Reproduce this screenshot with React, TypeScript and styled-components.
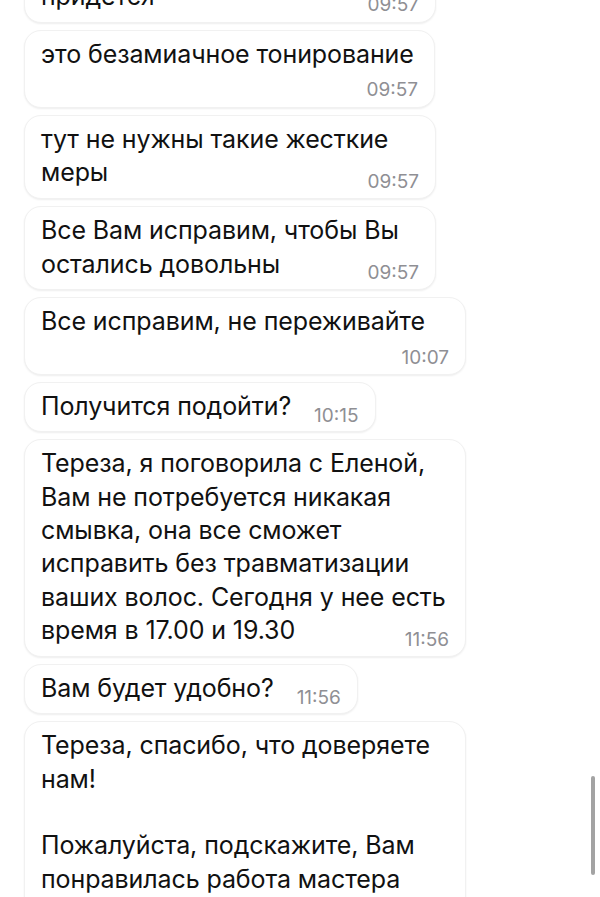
import React from "react";
import styled, { createGlobalStyle } from "styled-components";

const GlobalStyle = createGlobalStyle`
  html, body {
    margin: 0;
    padding: 0;
    background: #ffffff;
    overflow: hidden;
  }
  body {
    font-family: Inter, "Noto Sans", "Liberation Sans", sans-serif;
    -webkit-font-smoothing: antialiased;
  }
`;

const Screen = styled.div`
  width: 600px;
  height: 897px;
  overflow: hidden;
  position: relative;
  background: #ffffff;
`;

// лента сообщений, прокручена так что первое сообщение видно только снизу
const Feed = styled.div`
  display: flex;
  flex-direction: column;
  align-items: flex-start;
  gap: 7px;
  padding-left: 24px;
  margin-top: -28px;
`;

const Bubble = styled.div<{ $w?: number; $inline?: boolean }>`
  box-sizing: border-box;
  width: ${(p) => (p.$w ? `${p.$w}px` : "auto")};
  display: flex;
  flex-direction: ${(p) => (p.$inline ? "row" : "column")};
  align-items: ${(p) => (p.$inline ? "flex-end" : "stretch")};
  gap: ${(p) => (p.$inline ? "23px" : "0")};
  padding: 7px 16px 7.5px 16px;
  background: #ffffff;
  border: 1px solid #f1f1f1;
  border-radius: 17px;
  box-shadow: 0 1px 2px rgba(0, 0, 0, 0.07);
`;

const Text = styled.div`
  font-size: 25px;
  line-height: 33.4px;
  color: #111111;
  white-space: pre;
  letter-spacing: -0.1px;
`;

const Time = styled.div<{ $mode: "below" | "end" | "inline" }>`
  font-size: 19px;
  line-height: 18px;
  color: #8f8f94;
  text-align: right;
  align-self: flex-end;
  margin-top: ${(p) => (p.$mode === "below" ? "10px" : p.$mode === "end" ? "-17px" : "0")};
  margin-bottom: ${(p) => (p.$mode === "inline" ? "-1px" : "0")};
`;

const ScrollThumb = styled.div`
  position: absolute;
  right: 5px;
  top: 776px;
  width: 4px;
  height: 99px;
  border-radius: 2px;
  background: #a3a3a3;
`;

type Msg = {
  text: string;
  time: string;
  mode: "below" | "end" | "inline";
  width?: number;
};

const messages: Msg[] = [
  { text: "придется", time: "09:57", mode: "end", width: 412 },
  { text: "это безамиачное тонирование", time: "09:57", mode: "below", width: 411 },
  { text: "тут не нужны такие жесткие\nмеры", time: "09:57", mode: "end", width: 412 },
  { text: "Все Вам исправим, чтобы Вы\nостались довольны", time: "09:57", mode: "end", width: 412 },
  { text: "Все исправим, не переживайте", time: "10:07", mode: "below", width: 442 },
  { text: "Получится подойти?", time: "10:15", mode: "inline" },
  {
    text:
      "Тереза, я поговорила с Еленой,\nВам не потребуется никакая\nсмывка, она все сможет\nисправить без травматизации\nваших волос. Сегодня у нее есть\nвремя в 17.00 и 19.30",
    time: "11:56",
    mode: "end",
    width: 442,
  },
  { text: "Вам будет удобно?", time: "11:56", mode: "inline" },
  {
    text:
      "Тереза, спасибо, что доверяете\nнам!\n\nПожалуйста, подскажите, Вам\nпонравилась работа мастера\nи результат?",
    time: "12:10",
    mode: "end",
    width: 442,
  },
];

export default function App() {
  return (
    <Screen>
      <GlobalStyle />
      <Feed>
        {messages.map((m, i) => (
          <Bubble key={i} $w={m.width} $inline={m.mode === "inline"}>
            <Text>{m.text}</Text>
            <Time $mode={m.mode}>{m.time}</Time>
          </Bubble>
        ))}
      </Feed>
      <ScrollThumb />
    </Screen>
  );
}
